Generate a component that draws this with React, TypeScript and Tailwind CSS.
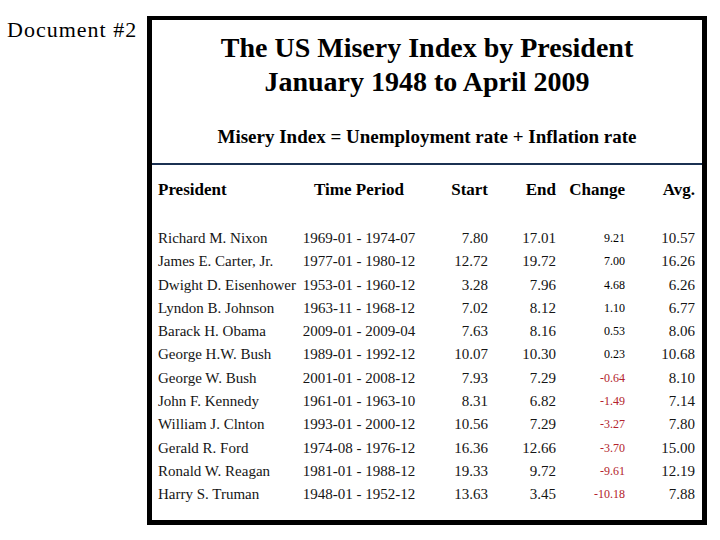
const rows = [
  ['Richard M. Nixon', '1969-01 - 1974-07', '7.80', '17.01', '9.21', '10.57'],
  ['James E. Carter, Jr.', '1977-01 - 1980-12', '12.72', '19.72', '7.00', '16.26'],
  ['Dwight D. Eisenhower', '1953-01 - 1960-12', '3.28', '7.96', '4.68', '6.26'],
  ['Lyndon B. Johnson', '1963-11 - 1968-12', '7.02', '8.12', '1.10', '6.77'],
  ['Barack H. Obama', '2009-01 - 2009-04', '7.63', '8.16', '0.53', '8.06'],
  ['George H.W. Bush', '1989-01 - 1992-12', '10.07', '10.30', '0.23', '10.68'],
  ['George W. Bush', '2001-01 - 2008-12', '7.93', '7.29', '-0.64', '8.10'],
  ['John F. Kennedy', '1961-01 - 1963-10', '8.31', '6.82', '-1.49', '7.14'],
  ['William J. Clnton', '1993-01 - 2000-12', '10.56', '7.29', '-3.27', '7.80'],
  ['Gerald R. Ford', '1974-08 - 1976-12', '16.36', '12.66', '-3.70', '15.00'],
  ['Ronald W. Reagan', '1981-01 - 1988-12', '19.33', '9.72', '-9.61', '12.19'],
  ['Harry S. Truman', '1948-01 - 1952-12', '13.63', '3.45', '-10.18', '7.88'],
];

const cols = 'grid grid-cols-[142px_130px_64px_68px_69px_70px]';

export default function App() {
  return (
    <div className="w-[720px] h-[540px] bg-white text-black font-['Liberation_Serif','Times_New_Roman',serif] flex items-start pt-[16px]">
      <div className="w-[147px] shrink-0 pl-[7px] text-[22px] leading-[27px] tracking-[1px] whitespace-nowrap">
        Document #2
      </div>

      <div className="w-[560px] h-[509px] shrink-0 border-[5px] border-t-4 border-black flex flex-col">
        <h1 className="pt-[11px] text-center font-bold text-[28px] leading-[34px]">
          The US Misery Index by President
          <br />
          January 1948 to April 2009
        </h1>

        <p className="mt-[26px] text-center font-bold text-[19px] leading-[24px]">
          Misery Index = Unemployment rate + Inflation rate
        </p>

        <div className="mt-[14px] h-[2px] bg-[#1b3152]" />

        <div className={`${cols} mt-[13px] font-bold text-[17px] leading-[24px]`}>
          <div className="pl-[6px]">President</div>
          <div className="text-center">Time Period</div>
          <div className="text-right">Start</div>
          <div className="text-right">End</div>
          <div className="text-right">Change</div>
          <div className="text-right">Avg.</div>
        </div>

        <div className="mt-[25px] text-[15px] text-[#151515]">
          {rows.map(([name, period, start, end, change, avg]) => (
            <div key={name} className={`${cols} h-[23.3px] leading-[23.3px]`}>
              <div className="pl-[6px] whitespace-nowrap">{name}</div>
              <div className="text-center whitespace-nowrap">{period}</div>
              <div className="text-right">{start}</div>
              <div className="text-right">{end}</div>
              <div
                className={`text-right text-[12px] ${change.startsWith('-') ? 'text-[#b3232b]' : 'text-black'}`}
              >
                {change}
              </div>
              <div className="text-right">{avg}</div>
            </div>
          ))}
        </div>
      </div>
    </div>
  );
}
